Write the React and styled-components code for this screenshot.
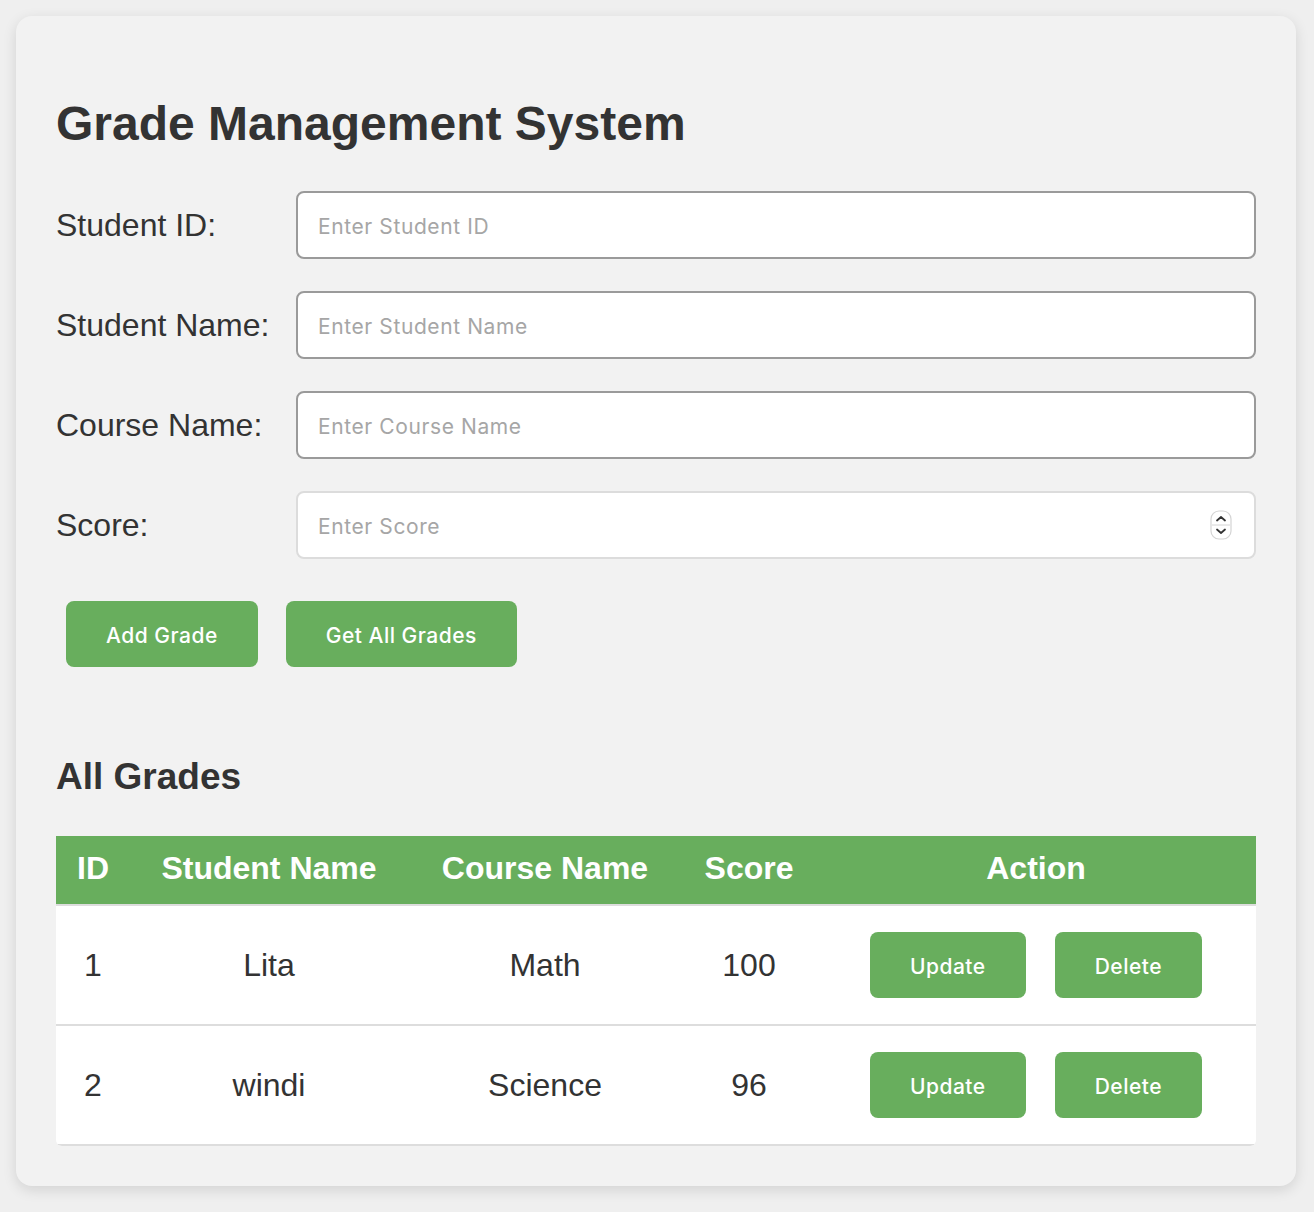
import React from "react";
import styled, {createGlobalStyle} from "styled-components";

const GlobalStyle = createGlobalStyle`
    body {
        margin: 0;
        padding: 16px 18px 26px 16px;
        background: #efefef;
        font-family: "Liberation Sans", Arial, sans-serif;
        color: #333;
    }
    input[type="number"]::-webkit-inner-spin-button,
    input[type="number"]::-webkit-outer-spin-button {
        -webkit-appearance: none;
        margin: 0;
    }
`;

const grades = [
    {id: 1, name: "Lita", course: "Math", score: 100},
    {id: 2, name: "windi", course: "Science", score: 96},
];

const fields = [
    {label: "Student ID:", placeholder: "Enter Student ID"},
    {label: "Student Name:", placeholder: "Enter Student Name"},
    {label: "Course Name:", placeholder: "Enter Course Name"},
];

function Spinner() {
    return (
        <SpinBox>
            <svg width="22" height="30" viewBox="0 0 22 30">
                <rect x="1" y="1" width="20" height="28" rx="8" fill="#fff" stroke="#d4d4d4" strokeWidth="1.2" />
                <line x1="2" y1="15" x2="20" y2="15" stroke="#d4d4d4" strokeWidth="1" />
                <path d="M7 10.5 L11 7 L15 10.5" fill="none" stroke="#333" strokeWidth="1.8" strokeLinecap="round" strokeLinejoin="round" />
                <path d="M7 19.5 L11 23 L15 19.5" fill="none" stroke="#333" strokeWidth="1.8" strokeLinecap="round" strokeLinejoin="round" />
            </svg>
        </SpinBox>
    );
}

export default function App() {
    return (
        <>
            <GlobalStyle />
            <Container>
                <Title>Grade Management System</Title>
                <Form>
                    {fields.map((f) => (
                        <FormRow key={f.label}>
                            <Label>{f.label}</Label>
                            <Input type="text" placeholder={f.placeholder} />
                        </FormRow>
                    ))}
                    <FormRow>
                        <Label>Score:</Label>
                        <InputWrap>
                            <Input type="number" placeholder="Enter Score" $light />
                            <Spinner />
                        </InputWrap>
                    </FormRow>
                </Form>
                <ButtonRow>
                    <Button>Add Grade</Button>
                    <Button>Get All Grades</Button>
                </ButtonRow>
                <SubTitle>All Grades</SubTitle>
                <Table>
                    <colgroup>
                        <col style={{width: 74}} />
                        <col style={{width: 278}} />
                        <col style={{width: 274}} />
                        <col style={{width: 134}} />
                        <col style={{width: 440}} />
                    </colgroup>
                    <thead>
                        <tr>
                            <Th>ID</Th>
                            <Th>Student Name</Th>
                            <Th>Course Name</Th>
                            <Th>Score</Th>
                            <Th>Action</Th>
                        </tr>
                    </thead>
                    <tbody>
                        {grades.map((g) => (
                            <tr key={g.id}>
                                <Td>{g.id}</Td>
                                <Td>{g.name}</Td>
                                <Td>{g.course}</Td>
                                <Td>{g.score}</Td>
                                <Td>
                                    <Actions>
                                        <Button>Update</Button>
                                        <Button>Delete</Button>
                                    </Actions>
                                </Td>
                            </tr>
                        ))}
                    </tbody>
                </Table>
            </Container>
        </>
    );
}

const Container = styled.div`
    background: #f2f2f2;
    border-radius: 16px;
    box-shadow: 0 4px 14px rgba(0, 0, 0, 0.12);
    padding: 40px;
`;

const Title = styled.h1`
    font-size: 48px;
    font-weight: bold;
    margin: 40px 0 40px 0;
    line-height: 55px;
`;

const Form = styled.div`
    display: flex;
    flex-direction: column;
    gap: 32px;
`;

const FormRow = styled.div`
    display: flex;
    align-items: center;
`;

const Label = styled.label`
    width: 240px;
    font-size: 32px;
    flex-shrink: 0;
`;

const InputWrap = styled.div`
    position: relative;
    flex: 1;
    display: flex;
`;

const Input = styled.input`
    flex: 1;
    box-sizing: border-box;
    height: 68px;
    border: 2px solid ${(p) => (p.$light ? "#dcdcdc" : "#9a9a9a")};
    border-radius: 8px;
    background: #fff;
    padding: 2px 20px 0 20px;
    font-family: Inter, "Noto Sans", sans-serif;
    font-size: 21px;
    letter-spacing: 0.6px;
    color: #333;
    outline: none;
    &::placeholder {
        color: #a6a6a6;
    }
`;

const SpinBox = styled.div`
    position: absolute;
    right: 24px;
    top: 19px;
    display: flex;
`;

const ButtonRow = styled.div`
    display: flex;
    gap: 28px;
    margin: 42px 0 0 10px;
`;

const Button = styled.button`
    height: 66px;
    padding: 2px 40px 0 40px;
    background: #68ae5d;
    color: #fff;
    border: none;
    border-radius: 8px;
    font-family: Inter, "Noto Sans", sans-serif;
    font-size: 21px;
    letter-spacing: 0.5px;
    font-weight: 500;
    cursor: pointer;
`;

const SubTitle = styled.h2`
    font-size: 37px;
    font-weight: bold;
    margin: 89px 0 38px 0;
    line-height: 42px;
`;

const Table = styled.table`
    width: 100%;
    table-layout: fixed;
    border-collapse: separate;
    border-spacing: 0;
    background: #fff;
    border-radius: 0 0 6px 6px;
    overflow: hidden;
`;

const Th = styled.th`
    background: #68ae5d;
    color: #fff;
    font-size: 32px;
    font-weight: bold;
    height: 64px;
    padding: 0 0 4px 0;
    text-align: center;
    border-bottom: 2px solid #ddd;
`;

const Td = styled.td`
    font-size: 32px;
    height: 118px;
    padding: 0;
    text-align: center;
    border-bottom: 2px solid #ddd;
`;

const Actions = styled.div`
    display: flex;
    justify-content: center;
    gap: 29px;
`;
